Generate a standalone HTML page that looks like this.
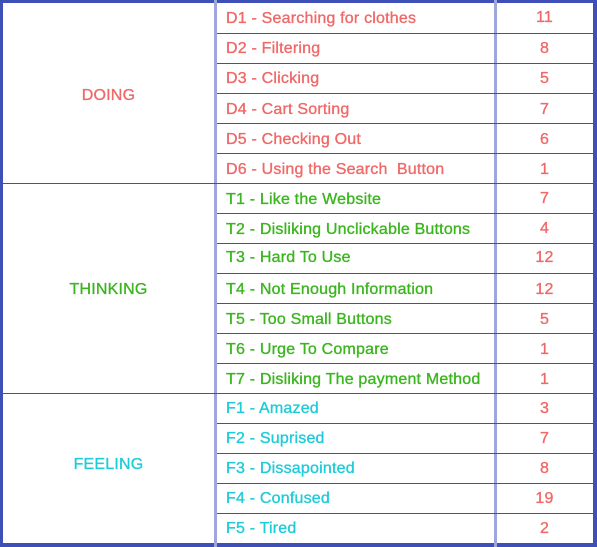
<!DOCTYPE html>
<html><head><meta charset="utf-8"><style>
*{margin:0;padding:0;box-sizing:border-box}
body{width:597px;height:547px;background:#fff;position:relative;font-family:"Liberation Sans",sans-serif;font-size:16px;letter-spacing:0.2px;overflow:hidden;-webkit-text-stroke:0.35px currentColor}
.b{position:absolute;background:#3f4fb8}
.v{position:absolute;background:#9fa6dd;width:3px}
.t{position:absolute;left:226px;line-height:30px;white-space:nowrap}
.n{position:absolute;left:496px;width:97px;text-align:center;line-height:30px;color:#f06868}
.c{position:absolute;left:3px;width:211px;text-align:center;line-height:30px}
.r{color:#f06868}.g{color:#3bb51f}.cy{color:#1ecbd9}
</style></head><body>
<div class="b" style="left:0;top:0;width:597px;height:3px"></div>
<div class="b" style="left:0;top:543px;width:597px;height:4px"></div>
<div class="b" style="left:0;top:0;width:3px;height:547px"></div>
<div class="b" style="left:593px;top:0;width:4px;height:547px"></div>
<div class="v" style="left:214px;top:0;height:547px"></div>
<div class="v" style="left:494px;top:0;height:547px"></div>
<div id="lines"></div>
<script>
var y=[33,63,93,123,153,183,213,243,273,303,333,363,393,423,453,483,513];
var h='';y.forEach(function(v){var full=(v==183||v==393);h+='<div class="b" style="left:'+(full?0:217)+'px;top:'+v+'px;width:'+(full?597:376)+'px;height:1px"></div>'});
document.getElementById('lines').innerHTML=h;
</script>
<div class="c r" style="top:81px">DOING</div>
<div class="c g" style="top:275px">THINKING</div>
<div class="c cy" style="top:450px">FEELING</div>

<div class="t r" style="top:4px">D1 - Searching for clothes</div><div class="n" style="top:3px">11</div>
<div class="t r" style="top:34px">D2 - Filtering</div><div class="n" style="top:34px">8</div>
<div class="t r" style="top:64px">D3 - Clicking</div><div class="n" style="top:64px">5</div>
<div class="t r" style="top:95px">D4 - Cart Sorting</div><div class="n" style="top:95px">7</div>
<div class="t r" style="top:125px">D5 - Checking Out</div><div class="n" style="top:125px">6</div>
<div class="t r" style="top:155px">D6 - Using the Search&nbsp; Button</div><div class="n" style="top:155px">1</div>
<div class="t g" style="top:185px">T1 - Like the Website</div><div class="n" style="top:184px">7</div>
<div class="t g" style="top:215px">T2 - Disliking Unclickable Buttons</div><div class="n" style="top:214px">4</div>
<div class="t g" style="top:243px">T3 - Hard To Use</div><div class="n" style="top:243px">12</div>
<div class="t g" style="top:275px">T4 - Not Enough Information</div><div class="n" style="top:275px">12</div>
<div class="t g" style="top:305px">T5 - Too Small Buttons</div><div class="n" style="top:305px">5</div>
<div class="t g" style="top:335px">T6 - Urge To Compare</div><div class="n" style="top:335px">1</div>
<div class="t g" style="top:365px">T7 - Disliking The payment Method</div><div class="n" style="top:365px">1</div>
<div class="t cy" style="top:394px">F1 - Amazed</div><div class="n" style="top:394px">3</div>
<div class="t cy" style="top:424px">F2 - Suprised</div><div class="n" style="top:424px">7</div>
<div class="t cy" style="top:454px">F3 - Dissapointed</div><div class="n" style="top:454px">8</div>
<div class="t cy" style="top:484px">F4 - Confused</div><div class="n" style="top:484px">19</div>
<div class="t cy" style="top:514px">F5 - Tired</div><div class="n" style="top:514px">2</div>
</body></html>
